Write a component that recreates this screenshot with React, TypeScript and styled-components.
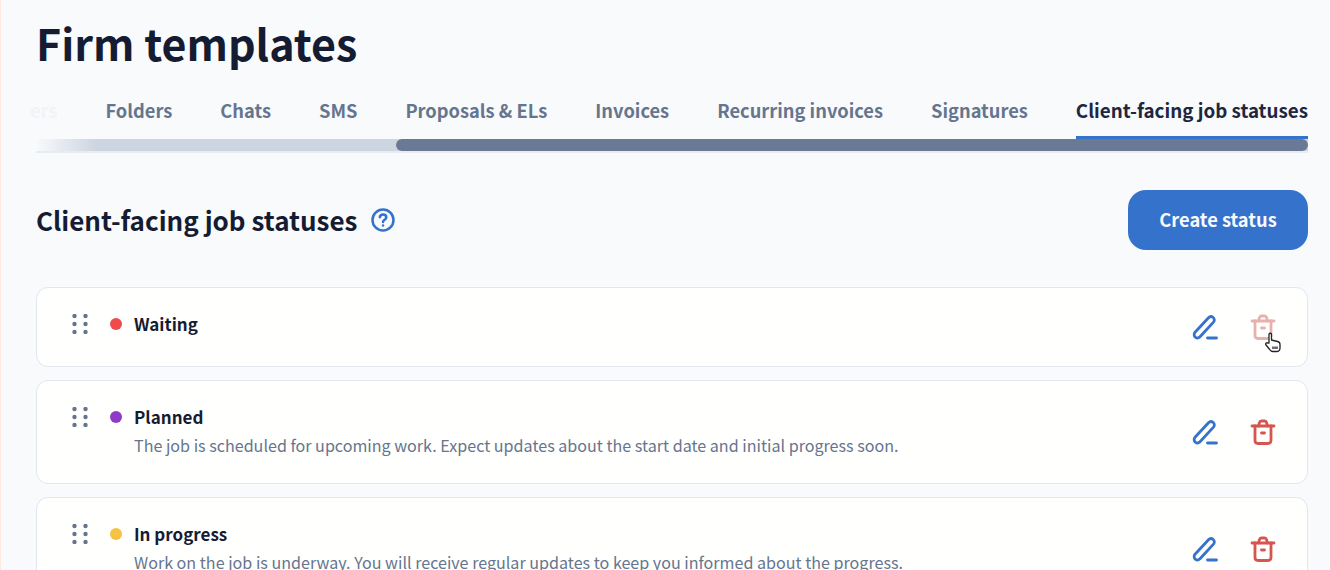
import React from "react";
import styled, { createGlobalStyle } from "styled-components";

const Global = createGlobalStyle`
  html, body { margin: 0; padding: 0; height: 100%; overflow: hidden; background: #f8fafc; }
  body { font-family: "Noto Sans CJK SC", "Noto Sans", sans-serif; color: #151c32; }
`;

const Page = styled.main`
  box-sizing: border-box;
  width: 1330px;
  height: 570px;
  overflow: hidden;
  padding: 0 22px 0 36px;
  background: #f8fafc;
  box-shadow: inset 1px 0 0 #fdeadd, inset -1px 0 0 #ffffff;
`;
const Title = styled.h1`
  margin: 12px 0 0;
  font-size: 43px;
  line-height: 60px;
  font-weight: 700;
  color: #151c32;
`;
const TabsWrap = styled.div`
  position: relative;
  margin-top: 11px;
  width: 1272px;
`;
const Tabs = styled.nav`
  display: flex;
  justify-content: flex-end;
  gap: 48px;
  height: 56px;
`;
const Tab = styled.div<{ $active?: boolean }>`
  flex: none;
  box-sizing: border-box;
  height: 56px;
  padding-top: 13px;
  font-size: ${(p) => (p.$active ? "18.8px" : "18.3px")};
  line-height: 28px;
  font-weight: ${(p) => (p.$active ? 700 : 600)};
  color: ${(p) => (p.$active ? "#1e2640" : "#66758e")};
  border-bottom: 3px solid ${(p) => (p.$active ? "#3572cc" : "transparent")};
`;
const Fade = styled.div`
  position: absolute;
  left: -6px;
  top: 0;
  width: 68px;
  height: 53px;
  background: linear-gradient(90deg, rgba(248, 250, 252, 0.95) 45%, rgba(248, 250, 252, 0.4) 95%, rgba(248, 250, 252, 0));
`;
const Track = styled.div`
  box-sizing: border-box;
  display: flex;
  justify-content: flex-end;
  height: 14px;
  background:
    linear-gradient(90deg, #f8fafc 0, #cdd5e0 60px, #cdd5e0 100%) top / 100% 12px no-repeat,
    #e8ecf2;
`;
const Thumb = styled.div`
  width: 912px;
  height: 12px;
  border-radius: 6px;
  background: #6b7a94;
`;
const Header = styled.div`
  display: flex;
  align-items: center;
  justify-content: space-between;
  width: 1272px;
  margin-top: 37px;
`;
const HeadLeft = styled.div`
  display: flex;
  align-items: center;
  gap: 14px;
`;
const H2 = styled.h2`
  margin: 0;
  font-size: 26px;
  line-height: 36px;
  font-weight: 600;
  color: #151c32;
`;
const Create = styled.button`
  width: 180px;
  height: 60px;
  padding: 0 0 2px;
  border: 0;
  border-radius: 18px;
  background: #3572cc;
  color: #f7f9fc;
  font: 600 18.3px/28px "Noto Sans CJK SC", sans-serif;
`;
const List = styled.div`
  display: flex;
  flex-direction: column;
  gap: 13px;
  width: 1272px;
  margin-top: 37px;
`;
const Card = styled.article<{ $h: number }>`
  box-sizing: border-box;
  display: flex;
  align-items: center;
  height: ${(p) => p.$h}px;
  padding: 0 31px 0 35px;
  border: 1px solid #e2e6f0;
  border-radius: 12px;
  background: #fffffe;
  flex: none;
`;
const Grip = styled.svg`
  flex: none;
  align-self: flex-start;
  margin-top: 26px;
`;
const Dot = styled.span<{ $c: string }>`
  flex: none;
  width: 12px;
  height: 12px;
  border-radius: 50%;
  background: ${(p) => p.$c};
  margin: 30px 12px 0 22px;
  align-self: flex-start;
`;
const Body = styled.div`
  flex: 1;
  align-self: flex-start;
  padding-top: 22px;
`;
const Name = styled.div`
  font-size: 17px;
  line-height: 28px;
  font-weight: 600;
  color: #151c32;
`;
const Desc = styled.div`
  font-size: 16.1px;
  line-height: 28px;
  color: #66758e;
`;
const Actions = styled.div`
  position: relative;
  display: flex;
  gap: 32px;
  flex: none;
`;
const Cursor = styled.svg`
  position: absolute;
  right: -6px;
  top: 17px;
`;

const Pencil = () => (
  <svg width="26" height="26" viewBox="0 0 26 26" fill="none" stroke="#3572cc" strokeWidth="2.800" strokeLinecap="round" strokeLinejoin="round">
    <path d="M2.800 18.500 16.500 3.800c1.300-1.400 3.300-1.500 4.700-.3 1.400 1.200 1.500 3.200.3 4.600L8 22.800c-1.300 1.300-3.200 1.500-4.500.6-1.400-1-1.800-3.500-.7-4.900Z" />
    <path d="M15.500 24h9" />
  </svg>
);
const Trash = ({ faded }: { faded?: boolean }) => (
  <svg width="26" height="26" viewBox="0 0 26 26" fill="none" stroke={faded ? "#e8b1ae" : "#d5554f"} strokeWidth="2.800" strokeLinecap="round" strokeLinejoin="round">
    <path d="M2 7h22" />
    <path d="M8.500 7l1-3.500c.2-.8.900-1.500 1.800-1.500h3.400c.9 0 1.600.7 1.800 1.500l1 3.500" />
    <path d="M5 7v14.500c0 1.700 1.300 3 3 3h10c1.700 0 3-1.300 3-3V7" />
    <path d="M11.500 14h3" />
  </svg>
);
const GripIcon = () => (
  <Grip width="16" height="20" viewBox="0 0 16 20" fill="#66758e">
    <circle cx="2.500" cy="2" r="2.200" /><circle cx="13.500" cy="2" r="2.200" />
    <circle cx="2.500" cy="10" r="2.200" /><circle cx="13.500" cy="10" r="2.200" />
    <circle cx="2.500" cy="18" r="2.200" /><circle cx="13.500" cy="18" r="2.200" />
  </Grip>
);

const tabs = ["ers", "Folders", "Chats", "SMS", "Proposals & ELs", "Invoices", "Recurring invoices", "Signatures"];
const rows = [
  { name: "Waiting", color: "#ef4b4f", h: 80, faded: true },
  { name: "Planned", color: "#8f3bc6", h: 104, desc: "The job is scheduled for upcoming work. Expect updates about the start date and initial progress soon." },
  { name: "In progress", color: "#f6c244", h: 104, desc: "Work on the job is underway. You will receive regular updates to keep you informed about the progress." },
];

export default function App() {
  return (
    <Page>
      <Global />
      <Title>Firm templates</Title>
      <TabsWrap>
        <Tabs>
          {tabs.map((t) => <Tab key={t}>{t}</Tab>)}
          <Tab $active>Client-facing job statuses</Tab>
        </Tabs>
        <Fade />
      </TabsWrap>
      <Track><Thumb /></Track>
      <Header>
        <HeadLeft>
          <H2>Client-facing job statuses</H2>
          <svg width="24" height="24" viewBox="0 0 24 24" fill="none" stroke="#3572cc" strokeWidth="2.500" strokeLinecap="round" strokeLinejoin="round">
            <circle cx="12" cy="12" r="10.500" />
            <path d="M8.800 9.300c.3-1.700 1.600-2.700 3.300-2.700 1.800 0 3.200 1.100 3.200 2.800 0 2.300-3.300 2.400-3.300 4.600" />
            <path d="M12 17.500h.01" />
          </svg>
        </HeadLeft>
        <Create>Create status</Create>
      </Header>
      <List>
        {rows.map((r) => (
          <Card key={r.name} $h={r.h}>
            <GripIcon />
            <Dot $c={r.color} />
            <Body>
              <Name>{r.name}</Name>
              {r.desc && <Desc>{r.desc}</Desc>}
            </Body>
            <Actions>
              <Pencil />
              <Trash faded={r.faded} />
              {r.faded && (
                <Cursor width="18" height="22" viewBox="0 0 18 22" fill="#fff" stroke="#222" strokeWidth="1.300" strokeLinejoin="round">
                  <path d="M5 12V3.500c0-1.700 2.500-1.700 2.500 0V9l6 1.500c1.500.4 2.500 1.300 2.500 3V17c0 2-1.500 3.500-3.500 3.500H9c-1.500 0-2.500-.7-3.300-2L2 14c-1-1.500.8-3 2.200-1.800Z" />
                  <path d="M9 15.500v2.500M11 15.500v2.500M13 15.500v2.500" />
                </Cursor>
              )}
            </Actions>
          </Card>
        ))}
      </List>
    </Page>
  );
}
